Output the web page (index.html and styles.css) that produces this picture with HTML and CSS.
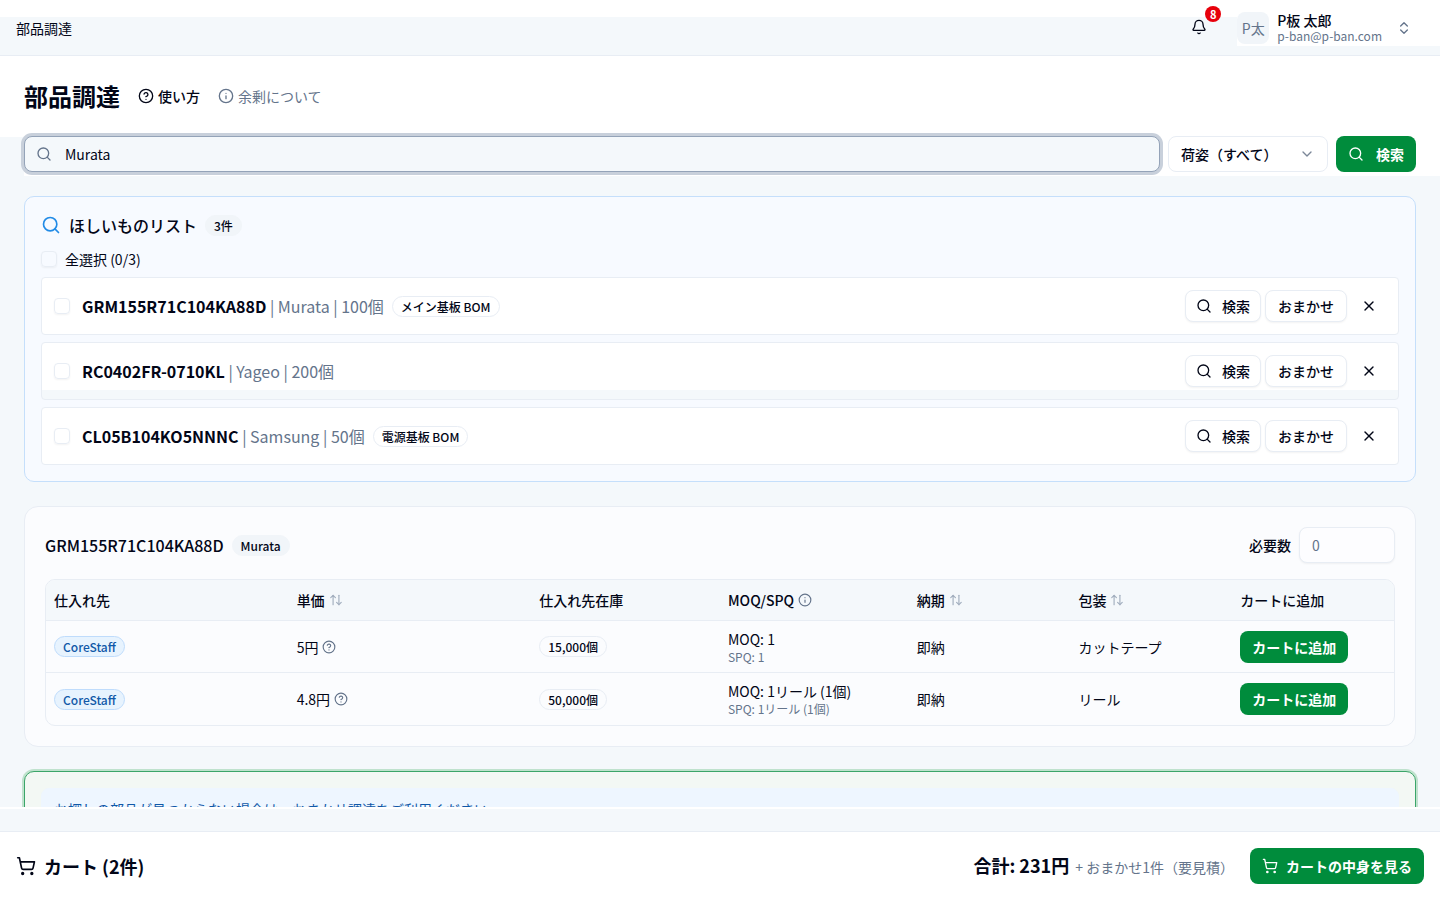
FILE: index.html
```
<!DOCTYPE html>
<html lang="ja">
<head>
  <meta charset="UTF-8" />
  <meta name="viewport" content="width=device-width, initial-scale=1.0" />
  <title>部品調達</title>
  <link rel="stylesheet" href="styles.css">
</head>
<body>

<!-- shared icons -->
<svg class="sprite" aria-hidden="true">
  <symbol id="search" viewBox="0 0 24 24"><circle cx="11" cy="11" r="8"/><path d="m21 21-4.3-4.3"/></symbol>
  <symbol id="help" viewBox="0 0 24 24"><circle cx="12" cy="12" r="10"/><path d="M9.09 9a3 3 0 0 1 5.83 1c0 2-3 3-3 3"/><path d="M12 17h.01"/></symbol>
  <symbol id="info" viewBox="0 0 24 24"><circle cx="12" cy="12" r="10"/><path d="M12 16v-4"/><path d="M12 8h.01"/></symbol>
  <symbol id="bell" viewBox="0 0 24 24"><path d="M10.27 21a2 2 0 0 0 3.46 0"/><path d="M3.26 15.33A1 1 0 0 0 4 17h16a1 1 0 0 0 .74-1.67C19.41 13.96 18 12.5 18 8A6 6 0 0 0 6 8c0 4.5-1.41 5.96-2.74 7.33"/></symbol>
  <symbol id="updown" viewBox="0 0 24 24"><path d="m7 15 5 5 5-5"/><path d="m7 9 5-5 5 5"/></symbol>
  <symbol id="down" viewBox="0 0 24 24"><path d="m6 9 6 6 6-6"/></symbol>
  <symbol id="close" viewBox="0 0 24 24"><path d="M18 6 6 18"/><path d="m6 6 12 12"/></symbol>
  <symbol id="cart" viewBox="0 0 24 24"><circle cx="8" cy="21" r="1"/><circle cx="19" cy="21" r="1"/><path d="M2.05 2.05h2l2.66 12.42a2 2 0 0 0 2 1.58h9.78a2 2 0 0 0 1.95-1.57l1.65-7.43H5.12"/></symbol>
  <symbol id="sort" viewBox="0 0 24 24"><path d="M7 20V4"/><path d="m3 8 4-4 4 4"/><path d="M17 4v16"/><path d="m21 16-4 4-4-4"/></symbol>
</svg>

<header class="topbar">
  <span>部品調達</span>
  <div class="topbar-right">
    <button class="bell" type="button" aria-label="お知らせ">
      <svg class="icon"><use href="#bell"/></svg>
      <span class="bell-count">8</span>
    </button>
    <button class="account" type="button">
      <span class="avatar">P太</span>
      <span class="account-text">
        <span class="account-name">P板 太郎</span>
        <span class="account-mail">p-ban@p-ban.com</span>
      </span>
      <svg class="icon muted"><use href="#updown"/></svg>
    </button>
  </div>
</header>

<section class="page-head">
  <div class="title-row">
    <h1>部品調達</h1>
    <a class="help-link" href="#"><svg class="icon"><use href="#help"/></svg>使い方</a>
    <a class="help-link sub" href="#"><svg class="icon"><use href="#info"/></svg>余剰について</a>
  </div>
  <form class="search-row">
    <div class="search-box">
      <svg class="icon muted"><use href="#search"/></svg>
      <input type="text" value="Murata" aria-label="部品を検索">
    </div>
    <div class="select-box">
      <select aria-label="荷姿">
        <option>荷姿（すべて）</option>
      </select>
      <svg class="icon"><use href="#down"/></svg>
    </div>
    <button class="btn btn-search" type="button"><svg class="icon"><use href="#search"/></svg>検索</button>
  </form>
</section>

<main>
  <section class="wishlist">
    <div class="wish-title">
      <svg class="icon icon-lg blue"><use href="#search"/></svg>
      <h2>ほしいものリスト</h2>
      <span class="badge badge-gray">3件</span>
    </div>
    <label class="select-all"><input type="checkbox">全選択 (0/3)</label>
    <ul class="wish-items">
      <li>
        <input type="checkbox" id="w1">
        <label for="w1"><b>GRM155R71C104KA88D</b> | Murata | 100個</label>
        <span class="badge">メイン基板 BOM</span>
        <div class="actions">
          <button class="btn-outline" type="button"><svg class="icon"><use href="#search"/></svg>検索</button>
          <button class="btn-outline" type="button">おまかせ</button>
          <button class="btn-close" type="button" aria-label="削除"><svg class="icon"><use href="#close"/></svg></button>
        </div>
      </li>
      <li class="shaded">
        <input type="checkbox" id="w2">
        <label for="w2"><b>RC0402FR-0710KL</b> | Yageo | 200個</label>
        <div class="actions">
          <button class="btn-outline" type="button"><svg class="icon"><use href="#search"/></svg>検索</button>
          <button class="btn-outline" type="button">おまかせ</button>
          <button class="btn-close" type="button" aria-label="削除"><svg class="icon"><use href="#close"/></svg></button>
        </div>
      </li>
      <li>
        <input type="checkbox" id="w3">
        <label for="w3"><b>CL05B104KO5NNNC</b> | Samsung | 50個</label>
        <span class="badge">電源基板 BOM</span>
        <div class="actions">
          <button class="btn-outline" type="button"><svg class="icon"><use href="#search"/></svg>検索</button>
          <button class="btn-outline" type="button">おまかせ</button>
          <button class="btn-close" type="button" aria-label="削除"><svg class="icon"><use href="#close"/></svg></button>
        </div>
      </li>
    </ul>
  </section>

  <section class="part-card">
    <div class="part-head">
      <h2>GRM155R71C104KA88D</h2>
      <span class="badge badge-gray">Murata</span>
      <label class="need" for="need">必要数</label>
      <input type="text" id="need" placeholder="0">
    </div>
    <div class="table-wrap">
      <table>
        <colgroup>
          <col class="wide"><col class="wide"><col class="mid"><col class="mid"><col><col><col>
        </colgroup>
        <thead>
          <tr>
            <th>仕入れ先</th>
            <th>単価<svg class="icon icon-sm sort"><use href="#sort"/></svg></th>
            <th>仕入れ先在庫</th>
            <th>MOQ/SPQ<svg class="icon icon-sm"><use href="#info"/></svg></th>
            <th>納期<svg class="icon icon-sm sort"><use href="#sort"/></svg></th>
            <th>包装<svg class="icon icon-sm sort"><use href="#sort"/></svg></th>
            <th>カートに追加</th>
          </tr>
        </thead>
        <tbody>
          <tr>
            <td><span class="badge badge-blue">CoreStaff</span></td>
            <td>5円<svg class="icon icon-sm"><use href="#help"/></svg></td>
            <td><span class="badge">15,000個</span></td>
            <td><div>MOQ: 1</div><div class="spq">SPQ: 1</div></td>
            <td>即納</td>
            <td>カットテープ</td>
            <td><button class="btn btn-sm" type="button">カートに追加</button></td>
          </tr>
          <tr>
            <td><span class="badge badge-blue">CoreStaff</span></td>
            <td>4.8円<svg class="icon icon-sm"><use href="#help"/></svg></td>
            <td><span class="badge">50,000個</span></td>
            <td><div>MOQ: 1リール (1個)</div><div class="spq">SPQ: 1リール (1個)</div></td>
            <td>即納</td>
            <td>リール</td>
            <td><button class="btn btn-sm" type="button">カートに追加</button></td>
          </tr>
        </tbody>
      </table>
    </div>
  </section>

  <section class="omakase">
    <p>お探しの部品が見つからない場合は、おまかせ調達をご利用ください。</p>
  </section>
</main>

<footer>
  <div class="cart-count"><svg class="icon icon-lg"><use href="#cart"/></svg>カート (2件)</div>
  <div class="total">合計: 231円 <span>+ おまかせ1件（要見積）</span></div>
  <button class="btn" type="button"><svg class="icon"><use href="#cart"/></svg>カートの中身を見る</button>
</footer>

</body>
</html>
```
FILE: styles.css
```
:root {
  --ink: #020617;
  --muted: #64748b;
  --line: #e8edf4;
  --tint: #f4f8fb;
  --green: #008c3c;
}

* {
  box-sizing: border-box;
}

body {
  margin: 0;
  height: 100vh;
  display: flex;
  flex-direction: column;
  background: var(--tint);
  color: var(--ink);
  font-family: "Noto Sans CJK JP", sans-serif;
  font-size: 14px;
  line-height: 20px;
}

h1, h2, p, ul {
  margin: 0;
  padding: 0;
}

button, input, select {
  font: inherit;
  color: inherit;
}

button {
  border: 0;
  background: none;
  padding: 0;
  cursor: pointer;
}

a {
  color: inherit;
  text-decoration: none;
}

.sprite {
  display: none;
}

.icon {
  width: 16px;
  height: 16px;
  flex: none;
  fill: none;
  stroke: currentColor;
  stroke-width: 2;
  stroke-linecap: round;
  stroke-linejoin: round;
}

.icon-lg {
  width: 20px;
  height: 20px;
}

.icon-sm {
  width: 14px;
  height: 14px;
}

.muted {
  color: var(--muted);
}

.blue {
  color: #228be6;
}

/* top bar */
.topbar {
  flex: none;
  height: 56px;
  display: flex;
  align-items: center;
  justify-content: space-between;
  padding-left: 16px;
  background: linear-gradient(#fff 17px, var(--tint) 17px);
  border-bottom: 1px solid var(--line);
}

.topbar-right {
  display: flex;
  align-self: flex-start;
  align-items: flex-end;
  gap: 22px;
}

.bell {
  position: relative;
  width: 32px;
  height: 38px;
  display: grid;
  place-items: center;
}

.bell-count {
  position: absolute;
  top: -2px;
  right: -6px;
  width: 16px;
  height: 16px;
  border-radius: 8px;
  background: #e7000b;
  color: #fff;
  font-size: 11px;
  font-weight: 700;
  line-height: 16px;
}

.account {
  display: flex;
  align-items: center;
  gap: 8px;
  height: 46px;
  padding: 10px 28px 0 0;
  background: #fff;
  text-align: left;
}

.avatar {
  width: 32px;
  height: 32px;
  border-radius: 8px;
  background: #f1f5f9;
  color: var(--muted);
  line-height: 32px;
  text-align: center;
}

.account-text {
  display: flex;
  flex-direction: column;
  margin-right: 6px;
  line-height: 16px;
}

.account-name {
  font-weight: 500;
}

.account-mail {
  font-size: 12px;
  color: var(--muted);
}

/* title and search */
.page-head {
  flex: none;
  padding: 24px 24px 4px;
  background: linear-gradient(90deg, var(--tint) 24px, #fff 24px) bottom / 100% 39px no-repeat, #fff;
}

.title-row {
  display: flex;
  align-items: center;
  gap: 18px;
  margin-bottom: 24px;
}

.title-row h1 {
  font-size: 24px;
  line-height: 32px;
  font-weight: 700;
}

.help-link {
  display: flex;
  align-items: center;
  gap: 4px;
  font-weight: 500;
}

.help-link.sub {
  color: var(--muted);
  font-weight: 400;
}

.search-row {
  display: flex;
  gap: 8px;
}

.search-box {
  position: relative;
  flex: 1;
}

.search-box .icon {
  position: absolute;
  left: 12px;
  top: 10px;
}

.search-box input {
  width: 100%;
  height: 36px;
  padding: 0 40px;
  border: 1px solid #94a3b8;
  border-radius: 8px;
  background: var(--tint);
  box-shadow: 0 0 0 3px #c8d0db;
  outline: none;
}

.select-box {
  position: relative;
  width: 160px;
}

.select-box select {
  appearance: none;
  width: 100%;
  height: 36px;
  padding: 0 12px;
  border: 1px solid var(--line);
  border-radius: 8px;
  background: #fff;
  font-weight: 500;
}

.select-box .icon {
  position: absolute;
  right: 13px;
  top: 10px;
  color: #7b8798;
  pointer-events: none;
}

.btn {
  display: flex;
  align-items: center;
  gap: 8px;
  height: 36px;
  padding: 0 12px;
  border-radius: 8px;
  background: var(--green);
  color: #fff;
  font-weight: 700;
}

.btn-search {
  gap: 12px;
}

.btn-sm {
  height: 32px;
}

/* cards */
main {
  flex: 1;
  min-height: 0;
  overflow: hidden;
  display: flex;
  flex-direction: column;
  gap: 24px;
  padding: 20px 24px 0;
  margin-bottom: 22px;
  border-bottom: 2px solid #fff;
}

main > section {
  flex: none;
}

h2 {
  font-size: 16px;
  line-height: 24px;
  font-weight: 500;
}

.badge {
  display: inline-block;
  padding: 0 8px;
  border: 1px solid var(--line);
  border-radius: 11px;
  font-size: 12px;
  font-weight: 500;
  line-height: 19px;
}

.badge-gray {
  background: #f1f5f9;
  border-color: #f1f5f9;
}

.badge-blue {
  background: #e7f3fe;
  border-color: #bfdcfc;
  color: #1159a8;
}

input[type="checkbox"] {
  appearance: none;
  flex: none;
  width: 16px;
  height: 16px;
  margin: 0;
  border: 1px solid var(--line);
  border-radius: 4px;
  box-shadow: 0 1px 2px rgba(0, 0, 0, 0.05);
}

.wishlist {
  padding: 16px;
  border: 1px solid #c5dffb;
  border-radius: 10px;
  background: #f7faff;
}

.wish-title,
.select-all {
  display: flex;
  align-items: center;
  gap: 8px;
}

.select-all {
  margin: 12px 0 8px;
}

.wish-items {
  display: grid;
  gap: 7px;
  list-style: none;
}

.wish-items li {
  display: flex;
  align-items: center;
  padding: 12px 11px 12px 12px;
  border: 1px solid var(--line);
  border-radius: 4px;
  background: #fff;
}

.wish-items .shaded {
  background: linear-gradient(#fff 47px, var(--tint) 47px);
}

.wish-items label {
  margin: 0 8px 0 12px;
  font-size: 16px;
  line-height: 24px;
  color: var(--muted);
}

.wish-items b {
  color: var(--ink);
}

.actions {
  display: flex;
  gap: 4px;
  margin-left: auto;
}

.btn-outline {
  display: flex;
  align-items: center;
  gap: 10px;
  height: 32px;
  padding: 0 10px;
  border: 1px solid var(--line);
  border-radius: 8px;
  background: #fff;
  box-shadow: 0 1px 2px rgba(0, 0, 0, 0.05);
  font-weight: 500;
}

.btn-outline:not(:first-child) {
  padding: 0 12px;
}

.btn-close {
  width: 36px;
  height: 32px;
  display: grid;
  place-items: center;
}

.part-card {
  padding: 20px;
  border: 1px solid var(--line);
  border-radius: 14px;
  background: #fbfcfe;
}

.part-head {
  display: flex;
  align-items: center;
  gap: 8px;
  margin-bottom: 16px;
}

.need {
  margin-left: auto;
  font-weight: 500;
}

.part-head input {
  width: 96px;
  height: 36px;
  padding: 0 12px;
  border: 1px solid var(--line);
  border-radius: 8px;
  background: #fdfdff;
  box-shadow: 0 1px 2px rgba(0, 0, 0, 0.05);
}

.part-head input::placeholder {
  color: var(--muted);
}

.table-wrap {
  overflow: hidden;
  border: 1px solid var(--line);
  border-radius: 10px;
}

table {
  width: 100%;
  table-layout: fixed;
  border-spacing: 0;
}

.wide {
  width: 18%;
}

.mid {
  width: 14%;
}

th, td {
  height: 52px;
  padding: 0 8px;
  text-align: left;
  border-bottom: 1px solid var(--line);
}

th {
  height: 41px;
  background: var(--tint);
  font-weight: 500;
}

tbody tr:last-child td {
  border-bottom: 0;
}

th .icon,
td .icon {
  margin-left: 4px;
  vertical-align: -1px;
  color: var(--muted);
}

th .sort {
  color: #a3afbf;
}

.spq {
  font-size: 12px;
  line-height: 16px;
  color: var(--muted);
}

.omakase {
  padding: 16px;
  border: 1px solid #3ba569;
  border-radius: 10px;
  background: #f3f8f4;
  box-shadow: 0 0 0 2px #bfe2cd;
}

.omakase p {
  padding: 10px 12px;
  border: 1px solid #eef6ff;
  border-radius: 8px;
  background: #eef6ff;
  color: #1159a8;
}

/* cart bar */
footer {
  flex: none;
  display: flex;
  align-items: center;
  padding: 16px;
  background: #fff;
  border-top: 1px solid var(--line);
}

.cart-count {
  display: flex;
  align-items: center;
  gap: 8px;
  font-size: 18px;
  font-weight: 700;
}

.total {
  margin: 0 16px 0 auto;
  font-size: 18px;
  font-weight: 700;
}

.total span {
  margin-left: 2px;
  font-size: 14px;
  font-weight: 400;
  color: var(--muted);
}
```
